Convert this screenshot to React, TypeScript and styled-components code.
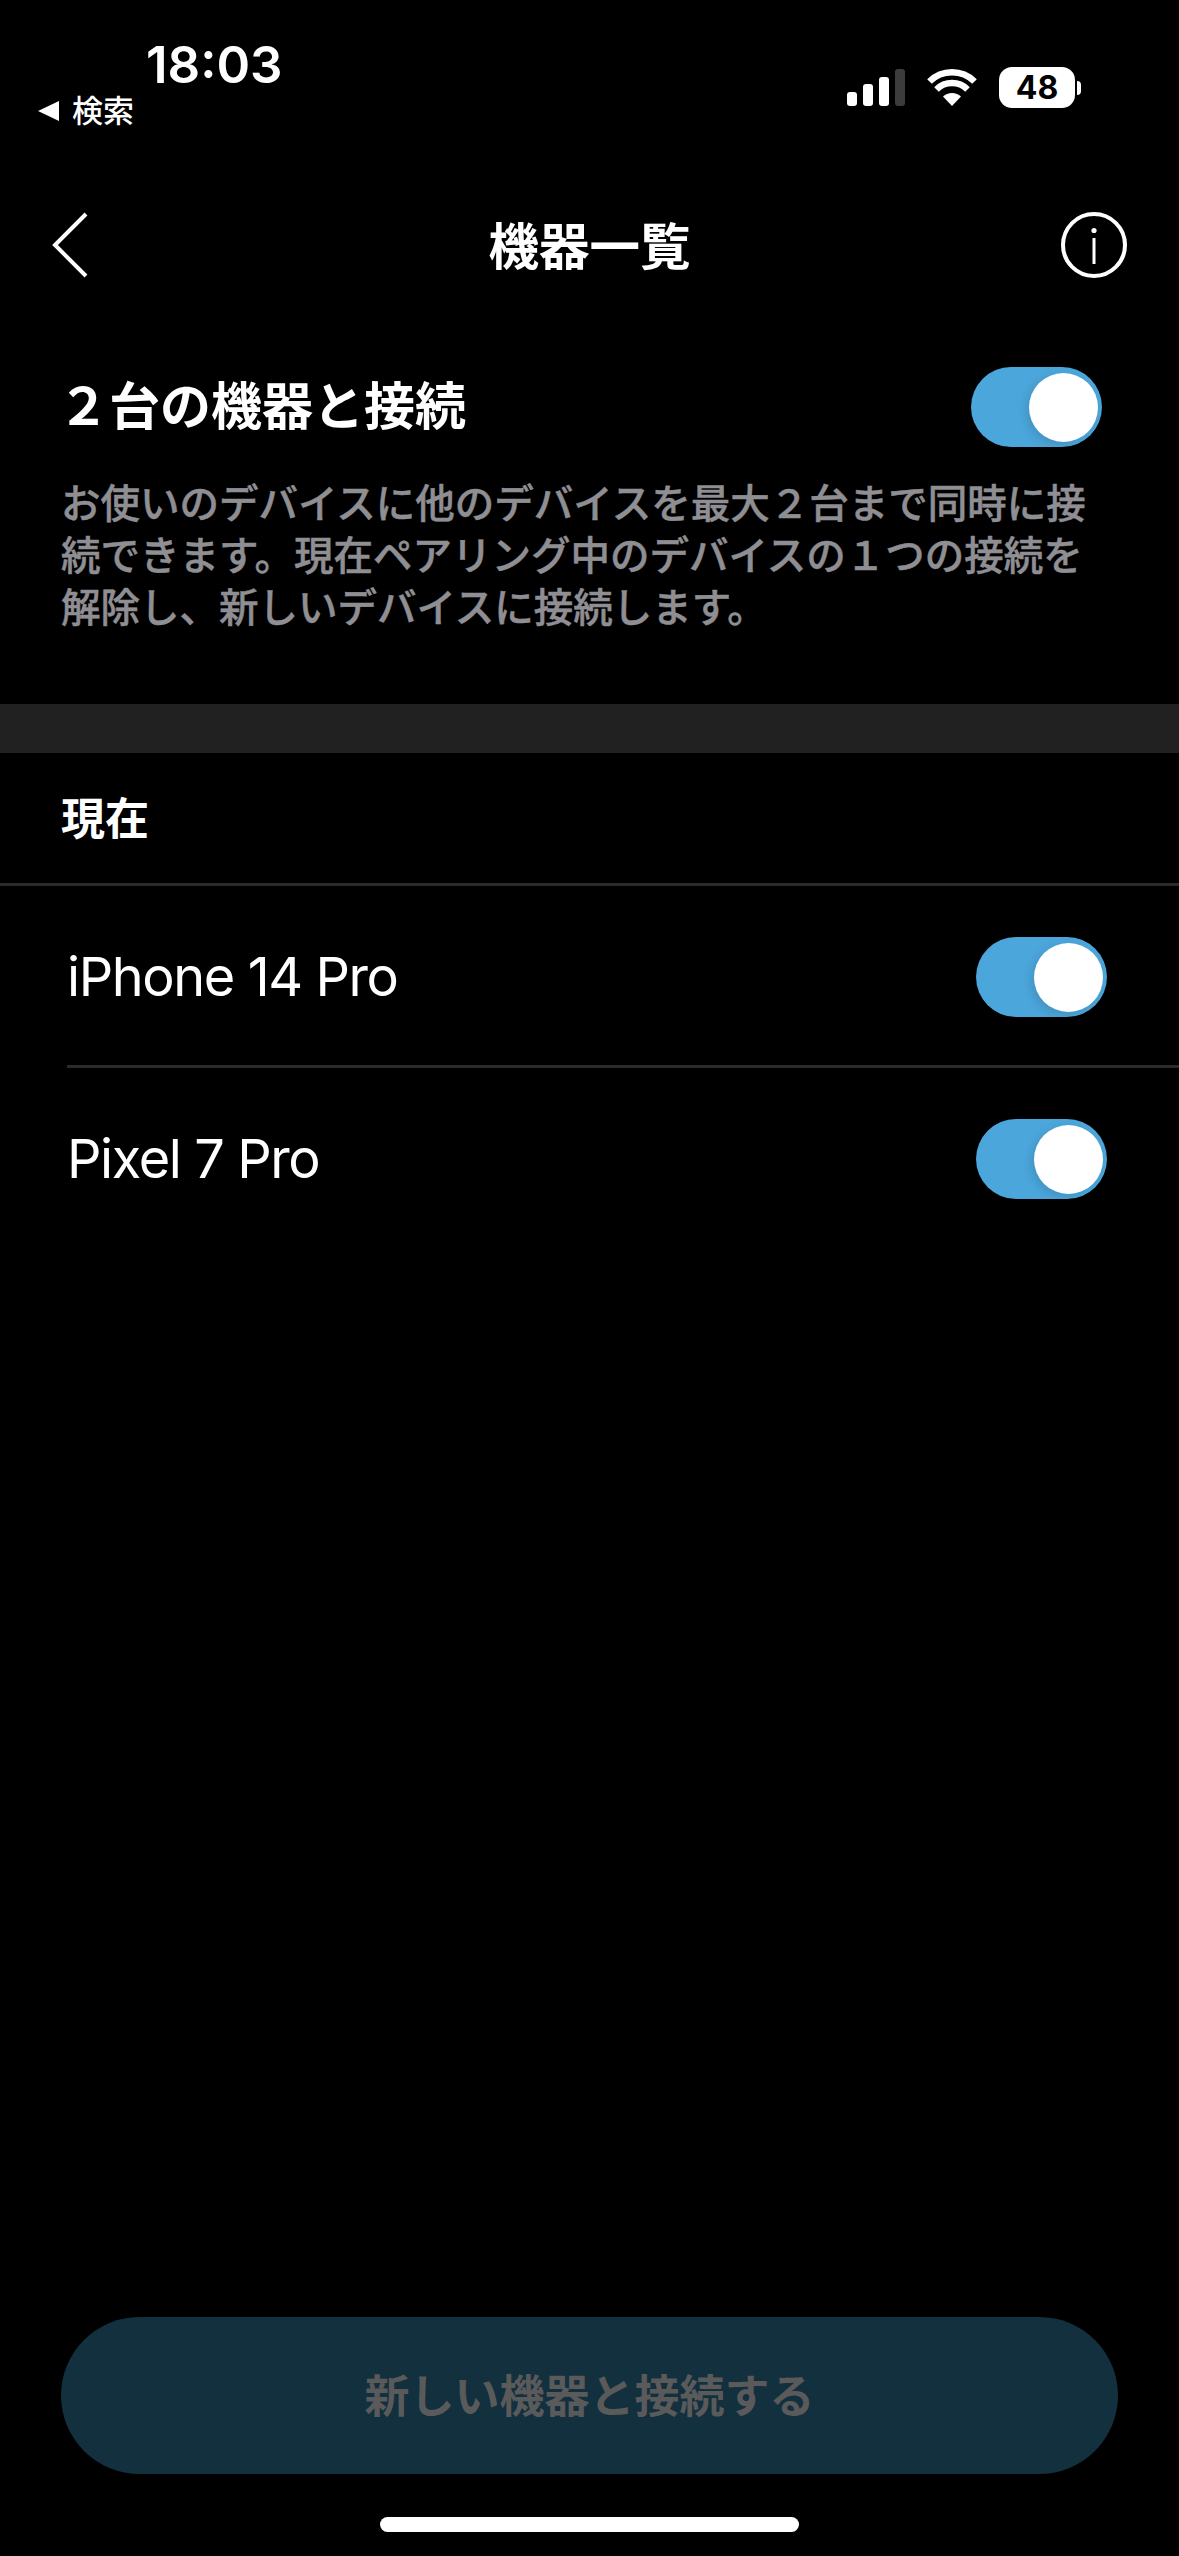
import { FC, Fragment } from "react";
import styled, { createGlobalStyle } from "styled-components";

const sansStack = `Inter, "Noto Sans CJK JP", sans-serif`;

const GlobalStyle = createGlobalStyle`
  html, body {
    margin: 0;
    padding: 0;
    background: #000000;
  }
`;

const devices = ["iPhone 14 Pro", "Pixel 7 Pro"];

const Toggle: FC = () => (
  <ToggleTrack>
    <ToggleKnob />
  </ToggleTrack>
);

const WifiIcon: FC = () => (
  <svg width="50" height="37" viewBox="0 0 50 37">
    <path d="M25 37 L16 27.5 A13 13 0 0 1 34 27.5 Z" fill="#fff" />
    <path d="M9.5 20.5 A22 22 0 0 1 40.5 20.5" fill="none" stroke="#fff" strokeWidth="6.5" />
    <path d="M2.5 12.5 A32 32 0 0 1 47.5 12.5" fill="none" stroke="#fff" strokeWidth="6.5" />
  </svg>
);

const App: FC = () => {
  return (
    <Page>
      <GlobalStyle />
      <StatusBar>
        <StatusLeft>
          <Clock>18:03</Clock>
          <BackLink>
            <BackTriangle />
            検索
          </BackLink>
        </StatusLeft>
        <StatusRight>
          <Signal>
            <SignalBar $height={14} />
            <SignalBar $height={22} />
            <SignalBar $height={29} />
            <SignalBar $height={37} $off />
          </Signal>
          <WifiIcon />
          <Battery>
            <BatteryBody>48</BatteryBody>
            <BatteryNub />
          </Battery>
        </StatusRight>
      </StatusBar>

      <NavBar>
        <svg width="36" height="66" viewBox="0 0 36 66">
          <path d="M34 2 L3 33 L34 64" fill="none" stroke="#fff" strokeWidth="4" />
        </svg>
        <NavTitle>機器一覧</NavTitle>
        <InfoIcon>
          <svg width="66" height="66" viewBox="0 0 66 66">
            <circle cx="33" cy="33" r="31" fill="none" stroke="#fff" strokeWidth="4" />
            <circle cx="33" cy="18.5" r="2.6" fill="#fff" />
            <rect x="31.5" y="26" width="3" height="26" fill="#fff" />
          </svg>
        </InfoIcon>
      </NavBar>

      <IntroSection>
        <IntroHeader>
          <IntroTitle>２台の機器と接続</IntroTitle>
          <Toggle />
        </IntroHeader>
        <IntroText>
          お使いのデバイスに他のデバイスを最大２台まで同時に接
          <br />
          続できます。現在ペアリング中のデバイスの１つの接続を
          <br />
          解除し、新しいデバイスに接続します。
        </IntroText>
      </IntroSection>

      <Band />

      <SectionLabel>現在</SectionLabel>

      <DeviceList>
        {devices.map((name, i) => (
          <Fragment key={name}>
            {i > 0 && <RowDivider />}
            <DeviceRow>
              <DeviceName>{name}</DeviceName>
              <Toggle />
            </DeviceRow>
          </Fragment>
        ))}
      </DeviceList>

      <Footer>
        <ConnectButton type="button">新しい機器と接続する</ConnectButton>
        <HomeIndicator />
      </Footer>
    </Page>
  );
};

export default App;

const Page = styled.div`
  width: 1179px;
  height: 2556px;
  background: #000000;
  color: #ffffff;
  font-family: ${sansStack};
  display: flex;
  flex-direction: column;
  overflow: hidden;
`;

const StatusBar = styled.div`
  height: 140px;
  flex: none;
  display: flex;
  justify-content: space-between;
  align-items: flex-start;
  padding: 0 98px 0 38px;
  box-sizing: border-box;
`;

const StatusLeft = styled.div`
  display: flex;
  flex-direction: column;
  padding-top: 36px;
`;

const Clock = styled.div`
  font-size: 51px;
  line-height: 58px;
  font-weight: 600;
  margin-left: 108px;
`;

const BackLink = styled.div`
  display: flex;
  align-items: center;
  gap: 13px;
  font-size: 31px;
  line-height: 34px;
  font-weight: 500;
`;

const BackTriangle = styled.span`
  width: 0;
  height: 0;
  border-top: 10px solid transparent;
  border-bottom: 10px solid transparent;
  border-right: 21px solid #ffffff;
`;

const StatusRight = styled.div`
  display: flex;
  align-items: center;
  gap: 22px;
  padding-top: 67px;
`;

const Signal = styled.div`
  display: flex;
  align-items: flex-end;
  gap: 6px;
  height: 37px;
`;

const SignalBar = styled.span<{ $height: number; $off?: boolean }>`
  width: 10px;
  height: ${(p) => p.$height}px;
  border-radius: 3px;
  background: ${(p) => (p.$off ? "#3c3c3c" : "#ffffff")};
`;

const Battery = styled.div`
  display: flex;
  align-items: center;
  gap: 2px;
`;

const BatteryBody = styled.div`
  width: 76px;
  height: 41px;
  border-radius: 13px;
  background: #ffffff;
  color: #000000;
  font-size: 32px;
  font-weight: 700;
  line-height: 41px;
  text-align: center;
`;

const BatteryNub = styled.span`
  width: 4px;
  height: 14px;
  border-radius: 0 7px 7px 0;
  background: #ffffff;
`;

const NavBar = styled.div`
  height: 210px;
  flex: none;
  display: grid;
  grid-template-columns: 1fr auto 1fr;
  align-items: center;
  padding: 0 52px;
`;

const NavTitle = styled.div`
  font-size: 50.5px;
  font-weight: 700;
  padding-bottom: 5px;
`;

const InfoIcon = styled.div`
  justify-self: end;
  height: 66px;
`;

const IntroSection = styled.div`
  height: 354px;
  flex: none;
  box-sizing: border-box;
  padding: 17px 77px 0 61px;
`;

const IntroHeader = styled.div`
  display: flex;
  justify-content: space-between;
  align-items: center;
  height: 80px;
`;

const IntroTitle = styled.div`
  font-size: 51px;
  font-weight: 700;
  padding-bottom: 8px;
  margin-left: -3px;
`;

const IntroText = styled.div`
  margin-top: 31px;
  font-size: 39.5px;
  line-height: 52px;
  font-weight: 500;
  color: #8e8e93;
  -webkit-text-stroke: 0.5px #8e8e93;
  white-space: nowrap;
`;

const Band = styled.div`
  height: 49px;
  flex: none;
  background: #212121;
`;

const SectionLabel = styled.div`
  height: 133px;
  flex: none;
  box-sizing: border-box;
  display: flex;
  align-items: center;
  padding: 0 0 5px 61px;
  font-size: 44px;
  font-weight: 700;
  border-bottom: 3px solid #2a2a2a;
`;

const DeviceList = styled.div`
  display: flex;
  flex-direction: column;
  padding: 2px 0 0 67px;
`;

const DeviceRow = styled.div`
  height: 177px;
  display: flex;
  justify-content: space-between;
  align-items: center;
  padding-right: 72px;
`;

const RowDivider = styled.div`
  height: 3px;
  margin-bottom: 2px;
  background: #2a2a2a;
`;

const DeviceName = styled.div`
  font-size: 54px;
  font-weight: 400;
  letter-spacing: -1.4px;
`;

const ToggleTrack = styled.div`
  width: 131px;
  height: 80px;
  box-sizing: border-box;
  padding: 6px 4px;
  border-radius: 40px;
  background: #4ba6db;
  display: flex;
  justify-content: flex-end;
`;

const ToggleKnob = styled.span`
  width: 69px;
  height: 69px;
  border-radius: 50%;
  background: #ffffff;
  box-shadow: -3px 3px 10px rgba(0, 0, 0, 0.12);
`;

const Footer = styled.div`
  margin-top: auto;
  display: flex;
  flex-direction: column;
  align-items: center;
  padding-bottom: 24px;
`;

const ConnectButton = styled.button`
  width: 1057px;
  height: 157px;
  border: none;
  border-radius: 79px;
  background: #13303f;
  color: #5a5a5a;
  font-family: ${sansStack};
  font-size: 45px;
  font-weight: 700;
  padding: 0 0 5px;
`;

const HomeIndicator = styled.div`
  width: 419px;
  height: 15px;
  margin-top: 43px;
  border-radius: 8px;
  background: #ffffff;
`;
